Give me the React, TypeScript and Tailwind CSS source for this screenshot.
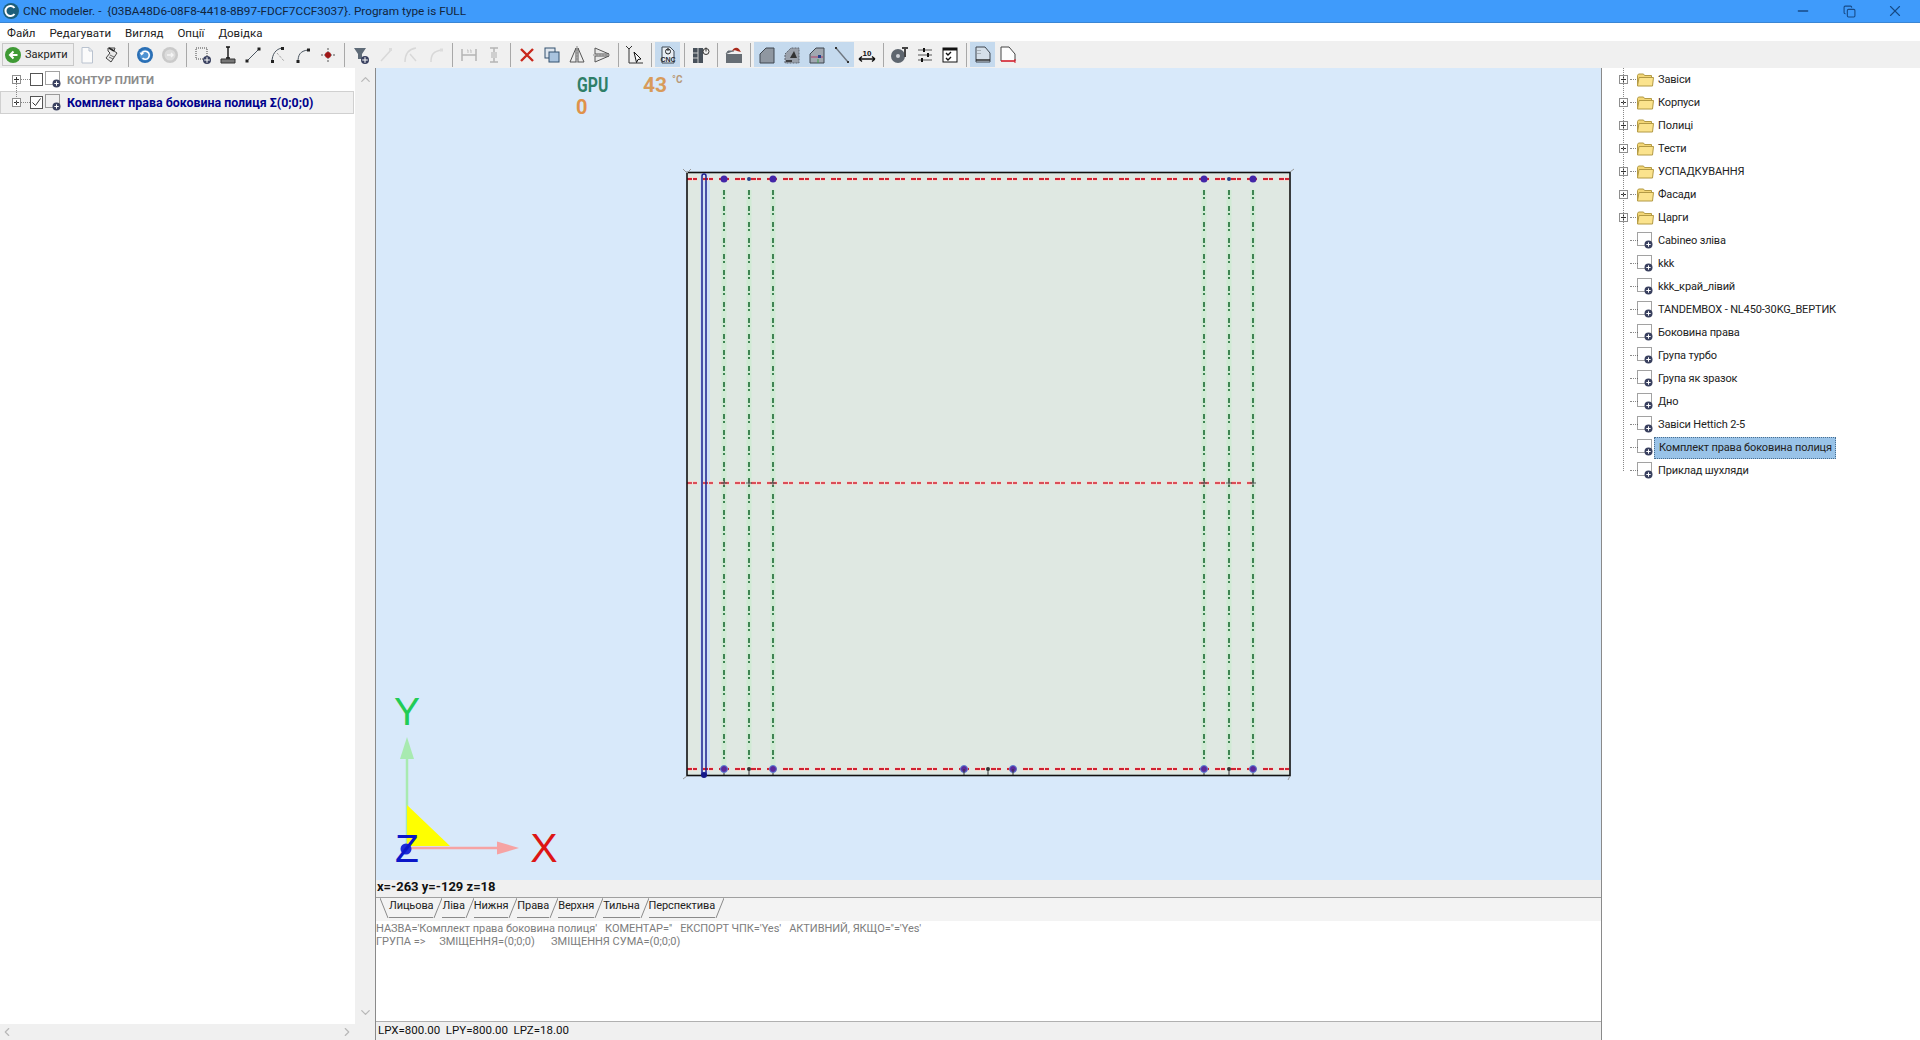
import type { ReactNode } from 'react'
import { ChevronDown, ChevronLeft, ChevronRight, ChevronUp, Minus, X, Copy } from 'lucide-react'

const sans = "font-['Roboto','Liberation_Sans',Arial,sans-serif]"

function G({ children }: { children: ReactNode }) {
  return (
    <svg width="20" height="20" viewBox="0 0 20 20" fill="none">
      {children}
    </svg>
  )
}

const plus = (cx: number, cy: number, r = 3.5) => (
  <g>
    <circle cx={cx} cy={cy} r={r} fill="#39405f" />
    <path d={`M${cx - r + 1.2} ${cy}h${2 * r - 2.4}M${cx} ${cy - r + 1.2}v${2 * r - 2.4}`} stroke="#fff" strokeWidth="1" />
  </g>
)

const chamfer = 'M3 18V9L9 3h8v15z'

const toolbar: (ReactNode | 'sep' | { on: ReactNode })[] = [
  <G><path d="M5 2.5h7l3.5 3.5v12H5z" stroke="#b9c2cf" fill="#fbfbfb" /><path d="M12 2.5V6h3.5" stroke="#b9c2cf" /></G>,
  <G><path d="M6 3h7l-1 3 3 2-6 9-5-4 4-5-2-2z" stroke="#444" fill="#e8e8e8" /><path d="M8 10l4 2M7 12l4 2" stroke="#666" /><path d="M7 3l5 3" stroke="#222" strokeWidth="1.5" /></G>,
  'sep',
  <G><circle cx="10" cy="10" r="8" fill="#2a6fb5" /><circle cx="10" cy="10" r="5.5" fill="#4f93d2" /><path d="M6.5 9a4 4 0 1 1 1 4.2" stroke="#fff" strokeWidth="1.6" /><path d="M4.5 7.5l2 3 2.6-2.2z" fill="#fff" /></G>,
  <G><circle cx="10" cy="10" r="8" fill="#c9c9c9" /><circle cx="10" cy="10" r="5.5" fill="#dcdcdc" /><path d="M7 10h6M11 8l2 2-2 2" stroke="#f5f5f5" strokeWidth="1.4" /></G>,
  'sep',
  <G><path d="M3 3h11v11H3z" stroke="#444" strokeDasharray="1 1" />{plus(14, 15, 4)}</G>,
  <G><path d="M3 14h14v4H3z" fill="#777" stroke="#333" /><path d="M10 2v11M8 2h4M8 13h4" stroke="#111" strokeWidth="1.4" /></G>,
  <G><path d="M4 16L16 4" stroke="#4a5560" /><rect x="2.5" y="14.5" width="3" height="3" fill="#222" /><rect x="14.5" y="2.5" width="3" height="3" fill="#222" /></G>,
  <G><path d="M4 17C4 9 8 4 14 3" stroke="#4a5560" /><path d="M9 8l7 8" stroke="#8a8a8a" strokeDasharray="1 1" /><rect x="3" y="15" width="3" height="3" fill="#222" /><rect x="13" y="2" width="3" height="3" fill="#222" /></G>,
  <G><path d="M5 17c0-7 2-11 10-12" stroke="#4a5560" /><rect x="3.5" y="15" width="3" height="3" fill="#222" /><rect x="14" y="3.5" width="3" height="3" fill="#222" /></G>,
  <G><path d="M10 3v14M3 10h14" stroke="#555" strokeDasharray="2 1" /><circle cx="10" cy="10" r="3" fill="#a01818" /></G>,
  'sep',
  <G><path d="M3 3h12l-4 6v5H7V9z" fill="#5f6b78" />{plus(14, 15, 4)}</G>,
  <G><path d="M5 16L15 5" stroke="#d8d8d8" strokeWidth="1.5" /><rect x="13" y="3" width="3" height="3" fill="#dcdcdc" /></G>,
  <G><path d="M4 17C4 9 8 4 15 3M9 9l6 7" stroke="#d8d8d8" strokeWidth="1.5" /></G>,
  <G><path d="M5 17c0-7 2-11 11-12" stroke="#d8d8d8" strokeWidth="1.5" /><rect x="14" y="3.5" width="3" height="3" fill="#dcdcdc" /></G>,
  'sep',
  <G><path d="M3 4v12M17 4v12M3 10h14" stroke="#b4b4b4" strokeWidth="1.5" /><path d="M8 5h1v3M11 5h1v3" stroke="#c0c0c0" /></G>,
  <G><path d="M6 3h8M6 17h8M10 3v14" stroke="#b4b4b4" strokeWidth="1.5" /><rect x="7" y="7" width="6" height="6" fill="#cfcfcf" /></G>,
  'sep',
  <G><path d="M4 4l12 12M16 4L4 16" stroke="#c9281c" strokeWidth="2.4" /></G>,
  <G><rect x="3" y="3" width="10" height="10" fill="#dfe6ee" stroke="#33506f" /><rect x="7" y="7" width="10" height="10" fill="#a9c3de" stroke="#33506f" /></G>,
  <G><path d="M9 3v14H3zM11 3v14h6z" fill="#eee" stroke="#555" /><path d="M10 1v18" stroke="#888" strokeDasharray="2 1" /></G>,
  <G><path d="M3 9V3l14 6zM3 11v6l14-6z" fill="#e8e8e8" stroke="#555" /><path d="M1 10h18" stroke="#888" strokeDasharray="2 1" /></G>,
  'sep',
  <G><path d="M4 3v15h14" stroke="#333" /><path d="M1 1l3 3 3-3" stroke="#333" /><path d="M9 7l7 7-3 .5-1.5 3z" fill="#fff" stroke="#111" /></G>,
  'sep',
  {
    on: (
      <G>
        <path d="M4 2h8l4 4v12H4z" fill="#e7edf3" stroke="#3c4854" />
        <circle cx="10" cy="6.5" r="2.5" stroke="#222" /><path d="M10 3v3" stroke="#222" />
        <text x="10" y="17" textAnchor="middle" fontSize="7" fontWeight="700" fill="#1f2b38" fontFamily="Liberation Sans">CNC</text>
      </G>
    ),
  },
  'sep',
  <G><path d="M2 3h10v15H2z" fill="#47505a" /><path d="M7 3v15M2 8h5M2 13h5" stroke="#ccc" /><circle cx="15" cy="6.5" r="3" stroke="#333" /><path d="M15 2.5v4" stroke="#333" /></G>,
  'sep',
  <G><path d="M2 9h16v9H2z" fill="#666d74" /><path d="M2 9l2-3h6" fill="#666d74" stroke="#666d74" /><path d="M8 6c2-4 5-4 7-2l2 3-4-1c-1-1-3-1-5 0z" fill="#a82a1c" /></G>,
  'sep',
  { on: <G><path d={chamfer} fill="#8f97a1" stroke="#3f4750" /></G> },
  { on: <G><path d={chamfer} fill="#9aa1ab" stroke="#5c6570" strokeDasharray="2 1" /><path d="M8 13l4-7 3 7z" fill="#333" /><path d="M4 16h6" stroke="#222" strokeWidth="1.5" /></G> },
  { on: <G><path d={chamfer} fill="#a0a7b0" stroke="#3f4750" /><path d="M4 12h12" stroke="#b0406a" /><path d="M11 10h3v3h-3z" fill="#27408b" /><path d="M11 14v4" stroke="#3fa34d" /></G> },
  { on: <G><path d="M4 3l12 14" stroke="#6f7780" strokeWidth="1.4" /><rect x="3" y="2" width="2" height="2" fill="#333" /><rect x="15" y="16" width="2" height="2" fill="#333" /></G> },
  <G><path d="M2 14h16M2 14l3-2.5M2 14l3 2.5M18 14l-3-2.5M18 14l-3 2.5" stroke="#111" strokeWidth="1.4" /><text x="10" y="11" textAnchor="middle" fontSize="8" fontWeight="700" fill="#111" fontFamily="Liberation Sans">10</text></G>,
  'sep',
  <G><circle cx="8" cy="11" r="7" fill="#5e666f" /><circle cx="8" cy="11" r="2" fill="#cfd3d8" /><path d="M12 3h6M15 3v9" stroke="#444" strokeWidth="2" /></G>,
  <G><path d="M3 5h14M3 10h14M3 15h14" stroke="#555" /><path d="M9 3v4M13 8v4M7 13v4" stroke="#111" strokeWidth="2" /></G>,
  <G><rect x="3" y="3" width="14" height="14" fill="#fff" stroke="#111" /><path d="M3 3h14v2.5H3z" fill="#111" /><path d="M6 8l2 2 3-3M6 13l2 2 3-3" stroke="#111" strokeWidth="1.4" /></G>,
  'sep',
  { on: <G><path d="M3 17V2h9l5 6v9z" fill="#d5dfe9" stroke="#3f4750" /><path d="M3 15h14" stroke="#222" strokeWidth="1.4" /><path d="M5 5v.5M7 5v.5M5 8v.5M7 8v.5" stroke="#222" /></G> },
  <G><path d="M3 16V2h8l6 7v7" fill="#fdfdfd" stroke="#444" /><path d="M3 16h14" stroke="#d21f2b" strokeWidth="1.6" /><path d="M17 14v4" stroke="#d21f2b" /></G>,
]

const isOn = (t: unknown): t is { on: ReactNode } => typeof t === 'object' && t !== null && 'on' in t

function Toolbar() {
  return (
    <div className="flex h-[27px] items-center bg-[#f0f0f0] pl-[2px]">
      <div className="flex h-[23px] w-[72px] items-center gap-[3px] border border-[#c8c8c8] bg-[#eeeeee] pl-[1px] text-[11px] text-[#222]">
        <svg width="18" height="18" viewBox="0 0 18 18">
          <circle cx="9" cy="9" r="8" fill="#3f9a35" />
          <path d="M13.5 9H7M9.5 5.5L6 9l3.5 3.5" stroke="#fff" strokeWidth="2" fill="none" />
        </svg>
        <span className="pt-[2px]">Закрити</span>
      </div>
      {toolbar.map((t, i) =>
        t === 'sep' ? (
          <div key={i} className="flex h-[24px] w-[8px] justify-center">
            <div className="w-px bg-[#a8a8a8]" />
          </div>
        ) : isOn(t) ? (
          <div key={i} className="flex h-[25px] w-[25px] items-center justify-center bg-[#c5daee]">
            {t.on}
          </div>
        ) : (
          <div key={i} className="flex h-[25px] w-[25px] items-center justify-center">
            {t as ReactNode}
          </div>
        ),
      )}
    </div>
  )
}

function Expand() {
  return (
    <div className="flex h-[9px] w-[9px] items-center justify-center border border-[#8f8f8f] bg-white">
      <svg width="7" height="7" viewBox="0 0 7 7">
        <path d="M1 3.5h5M3.5 1v5" stroke="#333" />
      </svg>
    </div>
  )
}

function Item() {
  return (
    <svg width="17" height="17" viewBox="0 0 17 17" fill="none">
      <path d="M.5 .5h14v13H.5z" stroke="#444" strokeDasharray="1 1" />
      <circle cx="11.5" cy="12.5" r="4" fill="#39405f" />
      <path d="M9.3 12.5h4.4M11.5 10.3v4.4" stroke="#fff" />
    </svg>
  )
}

function Folder() {
  return (
    <svg width="17" height="14" viewBox="0 0 17 14">
      <path d="M.5 13V2.5l1-1.5h5l1 1.5h7v2" fill="#f3d676" stroke="#b39a45" />
      <path d="M.5 13l1.5-8.5h14.5L15.5 13z" fill="#fbe38d" stroke="#b39a45" />
    </svg>
  )
}

const folders = ['Завіси', 'Корпуси', 'Полиці', 'Тести', 'УСПАДКУВАННЯ', 'Фасади', 'Царги']
const items = [
  'Cabineo зліва',
  'kkk',
  'kkk_край_лівий',
  'TANDEMBOX - NL450-30KG_ВЕРТИК',
  'Боковина права',
  'Група турбо',
  'Група як зразок',
  'Дно',
  'Завіси Hettich 2-5',
  'Комплект права боковина полиця',
  'Приклад шухляди',
]

function LibRow({ label, folder, selected }: { label: string; folder?: boolean; selected?: boolean }) {
  return (
    <div className="flex h-[23px] items-center">
      <div className="flex w-[13px] justify-center">{folder && <Expand />}</div>
      <div className="mr-[-1px] h-px w-[8px] border-t border-dotted border-[#888]" />
      <div className="flex w-[18px] items-center">{folder ? <Folder /> : <Item />}</div>
      <div className={`ml-[-1px] flex h-[22px] items-center pl-[4px] pr-[5px] ${selected ? 'w-[182px] border border-dotted border-[#4a6f90] bg-[#99c3e8]' : ''}`}>
        <span className="whitespace-nowrap pt-[2px] text-[11px] tracking-[-0.15px] text-[#222]">{label}</span>
      </div>
    </div>
  )
}

function Slant({ back }: { back?: boolean }) {
  return (
    <svg width="9" height="20" viewBox="0 0 9 20" className="shrink-0">
      <path d={back ? 'M0 0L8 20' : 'M9 0L1 20'} stroke="#8a8a8a" fill="none" />
    </svg>
  )
}

const tabs = ['Лицьова', 'Ліва', 'Нижня', 'Права', 'Верхня', 'Тильна', 'Перспектива']

const greens = [724, 749, 773, 1204, 1229, 1253]
const bigs = [724, 773, 1204, 1253]

function Drawing() {
  return (
    <svg viewBox="376 68 1225 812" className="h-full w-full" fill="none">
      <rect x="687" y="172.5" width="603" height="603" fill="#dfe8e2" />
      <rect x="700" y="172" width="10" height="604" fill="#cfdff5" />
      {greens.map((x) => (
        <g key={x}>
          <path d={`M${x} 190V766`} stroke="#d0ead4" strokeWidth="5" />
          <path d={`M${x} 190V766`} stroke="#2f7a45" strokeWidth="1.8" strokeDasharray="5 2 2 7" />
          <path d={`M${x} 769V775`} stroke="#333" strokeWidth="1" />
        </g>
      ))}
      {[179, 769].map((y) => (
        <g key={y}>
          <path d={`M687 ${y}H1290`} stroke="#f7d4cc" strokeWidth="4" strokeDasharray="5 1 4 6" />
          <path d={`M687 ${y}H1290`} stroke="#cf2233" strokeWidth="1.9" strokeDasharray="5 1 4 6" />
        </g>
      ))}
      <path d="M687 483H1253" stroke="#f7d4cc" strokeWidth="4" strokeDasharray="5 1 4 6" />
      <path d="M687 483H1253" stroke="#cf2233" strokeWidth="1.5" strokeDasharray="5 1 4 6" />
      {greens.map((x) => (
        <path key={x} d={`M${x - 3} 483H${x + 3}M${x} 480V486`} stroke="#555" />
      ))}
      <rect x="687" y="172.5" width="603" height="603" stroke="#111" strokeWidth="1.6" />
      <path d="M702 775V176a2 2 0 0 1 4 0V775" stroke="#1c1f8e" strokeWidth="1.5" />
      <circle cx="704" cy="775" r="3" fill="#14188a" />
      <path d="M683 169l4 4M691 169l-4 4M1290 172l4-3M1290 776l-2 4M687 776l-4 3" stroke="#999" />
      {bigs.map((x) => (
        <circle key={x} cx={x} cy="179" r="3.5" fill="#4326a8" />
      ))}
      {bigs.concat(964, 1013).map((x) => (
        <circle key={x} cx={x} cy="769" r="3.5" fill="#5b2a9a" stroke="#5b83d8" />
      ))}
      {[749, 1229].map((x) => (
        <circle key={x} cx={x} cy="179" r="2" fill="#28408a" />
      ))}
      {[749, 988, 1229].map((x) => (
        <circle key={x} cx={x} cy="769" r="2" fill="#333" />
      ))}
      <path d="M964 769v6M1013 769v6M988 769v6" stroke="#333" />

      <path d="M407 845V755" stroke="#a8eab0" strokeWidth="2.5" />
      <path d="M407 737l-7 22h14z" fill="#a8eab0" />
      <path d="M407 805L450 846H407z" fill="#ffff00" />
      <path d="M407 848H505" stroke="#f6a3a3" strokeWidth="2.5" />
      <path d="M519 848l-22-6.5v13z" fill="#f6a3a3" />
      <circle cx="406" cy="849" r="5.5" fill="#1d2bd8" />
      <text x="407" y="725" textAnchor="middle" fontSize="39" fill="#22cc55" fontFamily="Liberation Sans">Y</text>
      <text x="544" y="862" textAnchor="middle" fontSize="41" fill="#dd1515" fontFamily="Liberation Sans">X</text>
      <text x="407" y="862" textAnchor="middle" fontSize="39" fill="#0b16c8" fontFamily="Liberation Sans">Z</text>
    </svg>
  )
}

export default function App() {
  return (
    <div className={`flex h-[1040px] w-[1920px] flex-col overflow-hidden bg-white ${sans}`}>
      <div className="flex h-[23px] items-center border-b border-[#3a86d4] bg-[#3f9bfb] pl-[2px] text-[11.8px] text-[#12253d]">
        <svg width="18" height="18" viewBox="0 0 18 18" className="mr-[3px]">
          <circle cx="9" cy="9" r="8" fill="#1d5e7a" />
          <path d="M12.5 6A5 5 0 1 0 12.5 12" stroke="#fff" strokeWidth="2" fill="none" />
        </svg>
        <span className="whitespace-pre pt-[2px]">CNC modeler. -  {'{03BA48D6-08F8-4418-8B97-FDCF7CCF3037}'}. Program type is FULL</span>
        <div className="ml-auto flex items-center pr-[2px] text-[#174a86]">
          <div className="flex w-[46px] justify-center"><Minus size={16} /></div>
          <div className="flex w-[46px] justify-center"><Copy size={13} /></div>
          <div className="flex w-[46px] justify-center"><X size={18} strokeWidth={1.5} /></div>
        </div>
      </div>

      <div className="flex h-[18px] items-center gap-[14px] bg-white pl-[7px] pt-[3px] text-[11.5px] text-[#222]">
        {['Файл', 'Редагувати', 'Вигляд', 'Опції', 'Довідка'].map((m) => (
          <span key={m}>{m}</span>
        ))}
      </div>

      <Toolbar />

      <div className="flex min-h-0 flex-1">
        <div className="flex w-[375px] flex-col">
          <div className="flex min-h-0 flex-1">
            <div className="relative w-[355px]">
              <div className="absolute left-[16px] top-[12px] h-[23px] border-l border-dotted border-[#888]" />
              <div className="flex h-[23px] items-center pl-[12px]">
                <Expand />
                <div className="mx-0 h-px w-[9px] border-t border-dotted border-[#888]" />
                <div className="mr-[2px] h-[13px] w-[13px] border border-[#555] bg-white" />
                <Item />
                <span className="ml-[5px] pt-[2px] text-[11.5px] font-bold text-[#8c8c8c]">КОНТУР ПЛИТИ</span>
              </div>
              <div className="flex h-[23px] w-[354px] items-center border border-[#d0d0d0] bg-[#f0f0f0] pl-[11px]">
                <Expand />
                <div className="h-px w-[9px] border-t border-dotted border-[#888]" />
                <div className="mr-[2px] flex h-[13px] w-[13px] items-center justify-center border border-[#555] bg-white">
                  <svg width="11" height="11" viewBox="0 0 11 11">
                    <path d="M1.5 5.5l3 3 5-7" stroke="#333" fill="none" />
                  </svg>
                </div>
                <Item />
                <span className="ml-[5px] whitespace-nowrap pt-[2px] text-[12.4px] font-bold text-[#00008b]">Комплект права боковина полиця Σ(0;0;0)</span>
              </div>
            </div>
            <div className="flex w-[20px] flex-col items-center justify-between bg-[#f0f0f0] py-[4px] text-[#b8b8b8]">
              <ChevronUp size={15} />
              <ChevronDown size={15} />
            </div>
          </div>
          <div className="flex h-[16px] items-center justify-between bg-[#f0f0f0] text-[#b8b8b8]">
            <ChevronLeft size={14} />
            <ChevronRight size={14} className="mr-[21px]" />
          </div>
        </div>

        <div className="flex w-[1227px] flex-col border-x border-[#8a8a8a]">
          <div className="relative h-[812px] bg-[#d8e9fa]">
            <Drawing />
            <span className="absolute left-[201px] top-[7px] origin-left scale-x-[0.75] text-[21px] font-bold leading-[21px] text-[#2f7f68]">GPU</span>
            <span className="absolute left-[200px] top-[29px] text-[20px] font-bold leading-[20px] text-[#e0924a]">0</span>
            <span className="absolute left-[267px] top-[7px] text-[21px] font-bold leading-[21px] text-[#d89b5a]">43</span>
            <span className="absolute left-[296px] top-[7px] text-[10px] font-bold leading-[10px] text-[#b89a7a]">°C</span>
          </div>
          <div className="flex h-[17px] items-center bg-[#f0f0f0] pb-[4px] pl-px text-[13px] font-bold text-[#111]">x=-263 y=-129 z=18</div>
          <div className="flex h-[24px] items-start border-t border-[#a0a0a0] bg-[#f3f3f3] pl-[4px] text-[11px] tracking-[-0.1px] text-[#222]">
            <Slant back />
            {tabs.map((t) => (
              <div key={t} className="flex items-start">
                <span className="flex h-[20px] items-center whitespace-nowrap border-b border-[#8a8a8a] pb-[3px]">{t}</span>
                <Slant />
              </div>
            ))}
          </div>
          <div className="flex-1 bg-white pt-[1px] text-[11px] leading-[13px] text-[#7d7d7d]">
            <div className="whitespace-pre tracking-[-0.05px]">{"НАЗВА='Комплект права боковина полиця'   КОМЕНТАР=''   ЕКСПОРТ ЧПК='Yes'   АКТИВНИЙ, ЯКЩО=''='Yes'"}</div>
            <div className="whitespace-pre">{'ГРУПА =>     ЗМІЩЕННЯ=(0;0;0)      ЗМІЩЕННЯ СУМА=(0;0;0)'}</div>
          </div>
          <div className="flex h-[19px] items-center whitespace-pre border-t border-[#b0b0b0] bg-[#f0f0f0] pl-[2px] text-[11.5px] text-[#111]">LPX=800.00  LPY=800.00  LPZ=18.00</div>
        </div>

        <div className="relative flex-1 pl-[15px]">
          <div className="absolute bottom-[569px] left-[21px] top-0 border-l border-dotted border-[#888]" />
          {folders.map((f) => (
            <LibRow key={f} label={f} folder />
          ))}
          {items.map((f, i) => (
            <LibRow key={f} label={f} selected={i === 9} />
          ))}
        </div>
      </div>
    </div>
  )
}
